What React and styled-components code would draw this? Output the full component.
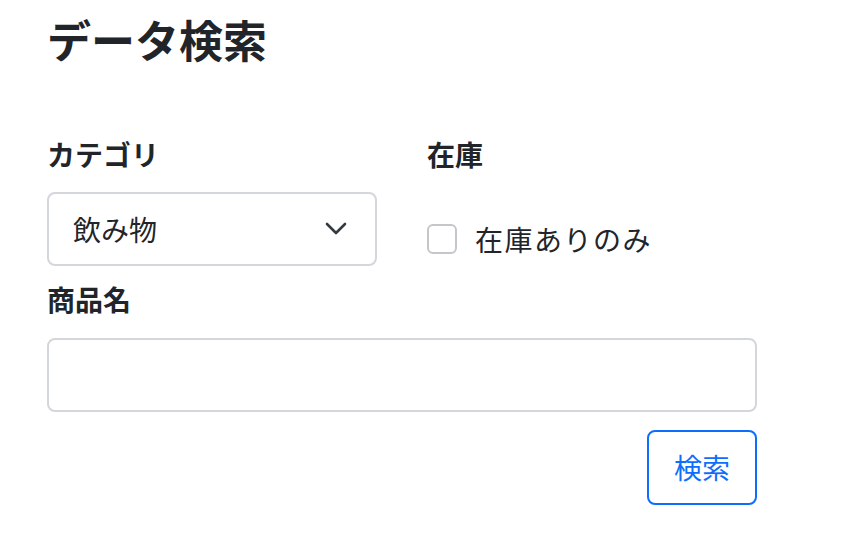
import React from "react";
import styled, { createGlobalStyle } from "styled-components";

const GlobalStyle = createGlobalStyle`
  body {
    margin: 0;
    background: #fff;
    font-family: "Noto Sans CJK JP", "Noto Sans", sans-serif;
    color: #212529;
  }
`;

const Page = styled.div`
  padding: 13px 47px 0;
  width: 710px;
`;

const Title = styled.h2`
  margin: 0 0 72px;
  font-size: 44px;
  font-weight: 700;
  line-height: 1.2;
`;

const Row = styled.div`
  display: grid;
  grid-template-columns: 330px 1fr;
  column-gap: 50px;
`;

const Field = styled.div`
  display: flex;
  flex-direction: column;
  margin-top: ${({ top }) => top || 0}px;
`;

const Label = styled.label`
  font-size: 28px;
  font-weight: 700;
  line-height: 1.2;
  margin-bottom: 21px;
`;

const SelectBox = styled.div`
  box-sizing: border-box;
  height: 74px;
  border: 2px solid #d3d6da;
  border-radius: 8px;
  padding: 0 28px 0 24px;
  display: flex;
  align-items: center;
  justify-content: space-between;
  font-size: 28px;
`;

const CheckRow = styled.label`
  box-sizing: border-box;
  height: 74px;
  padding-top: 20px;
  display: flex;
  align-items: center;
  gap: 18px;
  font-size: 28px;
  line-height: 1.2;
  letter-spacing: 1.5px;
`;

const Box = styled.span`
  box-sizing: border-box;
  width: 30px;
  height: 30px;
  border: 2px solid #c4c6c9;
  border-radius: 6px;
`;

const Input = styled.div`
  box-sizing: border-box;
  height: 74px;
  border: 2px solid #d3d6da;
  border-radius: 8px;
`;

const Actions = styled.div`
  display: flex;
  justify-content: flex-end;
  margin-top: 18px;
`;

const Button = styled.button`
  box-sizing: border-box;
  width: 110px;
  height: 75px;
  border: 2px solid #0d6efd;
  border-radius: 8px;
  background: #fff;
  color: #0d6efd;
  font-family: inherit;
  font-size: 28px;
`;

const Chevron = () => (
  <svg width="22" height="14" viewBox="0 0 22 14" fill="none">
    <path d="M2 2l9 9 9-9" stroke="#343a40" strokeWidth="2.6" strokeLinecap="round" strokeLinejoin="round" />
  </svg>
);

export default function App() {
  return (
    <Page>
      <GlobalStyle />
      <Title>データ検索</Title>
      <Row>
        <Field>
          <Label>カテゴリ</Label>
          <SelectBox>
            <span>飲み物</span>
            <Chevron />
          </SelectBox>
        </Field>
        <Field>
          <Label>在庫</Label>
          <CheckRow>
            <Box />
            在庫ありのみ
          </CheckRow>
        </Field>
      </Row>
      <Field top={17}>
        <Label>商品名</Label>
        <Input />
      </Field>
      <Actions>
        <Button>検索</Button>
      </Actions>
    </Page>
  );
}
